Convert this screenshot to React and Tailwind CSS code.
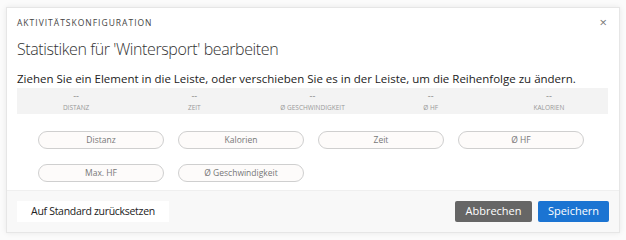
import React from "react";

const stats = ["Distanz", "Zeit", "Ø Geschwindigkeit", "Ø HF", "Kalorien"];
const chips = ["Distanz", "Kalorien", "Zeit", "Ø HF", "Max. HF", "Ø Geschwindigkeit"];

export default function App() {
  return (
    <div className="w-[626px] h-[240px] bg-[#fbfbfb] overflow-hidden pt-[7px] pl-[6px]" style={{ fontFamily: '"Open Sans", sans-serif' }}>
      <div className="w-[614px] h-[226px] bg-white border border-[#e6e6e6] shadow-[0_0_6px_rgba(0,0,0,0.08)] flex flex-col">
        <div className="px-[10px] pt-[9px] relative">
          <div className="text-[8.5px] tracking-[1px] text-[#444] leading-[12px]">AKTIVITÄTSKONFIGURATION</div>
          <div className="text-[16px] font-light tracking-[-0.4px] text-[#333] leading-[24px] mt-[8px]">Statistiken für 'Wintersport' bearbeiten</div>
          <button className="absolute right-[12px] top-[8px] text-[#777] text-[13px] leading-none">×</button>
          <div className="text-[11.5px] font-medium text-[#222] leading-[14px] mt-[11px]">Ziehen Sie ein Element in die Leiste, oder verschieben Sie es in der Leiste, um die Reihenfolge zu ändern.</div>
          <div className="grid grid-cols-5 bg-[#f3f3f3] h-[26px] mt-[2px] w-[591px]">
            {stats.map((s) => (
              <div key={s} className="flex flex-col items-center justify-center gap-[2px]">
                <div className="text-[9px] leading-[10px] text-[#888]">--</div>
                <div className="text-[6.5px] leading-[9px] text-[#999] uppercase">{s}</div>
              </div>
            ))}
          </div>
          <div className="grid grid-cols-[126px_126px_126px_126px] gap-x-[14px] gap-y-[15px] mt-[17px] ml-[21px]">
            {chips.map((c) => (
              <div key={c} className="h-[18px] rounded-full border border-[#cfcfcf] bg-[#fdfbfa] flex items-center justify-center text-[8.5px] text-[#777]">
                {c}
              </div>
            ))}
          </div>
        </div>
        <div className="mt-auto h-[42px] bg-[#f8f8f8] border-t border-[#efefef] flex items-center px-[10px]">
          <button className="h-[21px] w-[152px] bg-white text-[10.5px] tracking-[-0.3px] text-[#222]">Auf Standard zurücksetzen</button>
          <div className="ml-auto flex gap-[6px]">
            <button className="h-[21px] w-[77px] rounded-[2px] bg-[#666] text-[11px] text-white">Abbrechen</button>
            <button className="h-[21px] w-[71px] rounded-[2px] bg-[#1b74d2] text-[11px] text-white">Speichern</button>
          </div>
        </div>
      </div>
    </div>
  );
}
